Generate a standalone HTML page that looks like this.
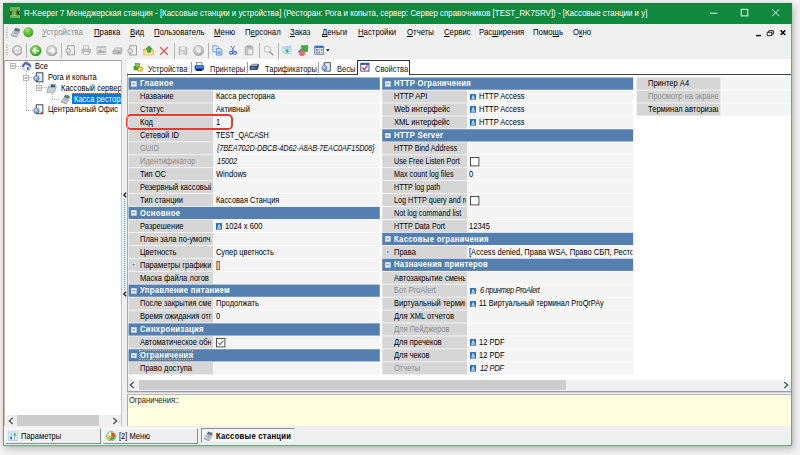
<!DOCTYPE html>
<html lang="ru"><head><meta charset="utf-8"><title>R-Keeper 7</title>
<style>
html,body{margin:0;padding:0;}
body{width:800px;height:455px;overflow:hidden;background:#f3f3f3;position:relative;font-family:"Liberation Sans", sans-serif;}
div,span.t,svg{position:absolute;box-sizing:border-box;}
span.t{white-space:nowrap;display:block;transform-origin:0 50%;}
u{text-decoration:underline;text-underline-offset:1px;text-decoration-thickness:0.8px}
</style></head><body>
<svg width="0" height="0" style="left:0;top:0"><defs>
<radialGradient id="gG" cx="0.4" cy="0.3" r="0.8"><stop offset="0" stop-color="#a8e86a"/><stop offset="0.6" stop-color="#4db82a"/><stop offset="1" stop-color="#2a8a1a"/></radialGradient>
<radialGradient id="gY" cx="0.4" cy="0.3" r="0.8"><stop offset="0" stop-color="#e6e6e6"/><stop offset="0.7" stop-color="#b9b9b9"/><stop offset="1" stop-color="#9a9a9a"/></radialGradient>
<radialGradient id="gB" cx="0.4" cy="0.35" r="0.8"><stop offset="0" stop-color="#cfe0ff"/><stop offset="0.7" stop-color="#6f96e0"/><stop offset="1" stop-color="#3d63b8"/></radialGradient>
</defs></svg>
<div style="left:3.20px;top:2.80px;width:788.80px;height:442.90px;background:#f0f0f0;border:1px solid #5cad7f;box-shadow:2px 3px 7px rgba(0,0,0,0.22),0 0 3px rgba(0,0,0,0.12);"></div>
<div style="left:3.20px;top:2.80px;width:788.80px;height:21.00px;background:#10893e;"></div>
<div style="left:9.70px;top:7.40px;width:10.40px;height:10.50px;background:#69b35a;"></div>
<span class="t" style="left:10.30px;top:8.23px;line-height:10.14px;font-size:7.8px;color:#0a1a0a;transform:scaleX(0.84);font-weight:bold;letter-spacing:0px;">r<span style="color:#f6fcf2">_</span>k</span>
<span class="t title" style="left:23.80px;top:6.89px;line-height:12.61px;font-size:9.7px;color:#fff;transform:scaleX(0.816);">R-Keeper 7 Менеджерская станция - [Кассовые станции и устройства] (Ресторан: Рога и копыта, сервер: Сервер справочников [TEST_RK7SRV]) - [Кассовые станции и у]</span>
<svg style="left:700px;top:3px" width="92" height="21" viewBox="0 0 92 21"><g stroke="#fff" stroke-width="0.9" fill="none"><path d="M10 10.2h7.4"/><rect x="41.2" y="6.3" width="6.6" height="6.6"/><path d="M72.3 6.3l6.8 6.8M79.1 6.3l-6.8 6.8"/></g></svg>
<svg style="left:5px;top:25px" width="4" height="34" viewBox="0 0 4 34"><g fill="#b8b8b8"><rect x="1" y="2" width="1.6" height="1.2"/><rect x="1" y="4.4" width="1.6" height="1.2"/><rect x="1" y="6.8" width="1.6" height="1.2"/><rect x="1" y="9.2" width="1.6" height="1.2"/><rect x="1" y="11.6" width="1.6" height="1.2"/><rect x="1" y="19.5" width="1.6" height="1.2"/><rect x="1" y="21.9" width="1.6" height="1.2"/><rect x="1" y="24.3" width="1.6" height="1.2"/><rect x="1" y="26.7" width="1.6" height="1.2"/><rect x="1" y="29.1" width="1.6" height="1.2"/></g></svg>
<span class="t" style="left:41.50px;top:27.45px;line-height:11.70px;font-size:9.0px;color:#8a8a8a;transform:scaleX(0.865);"><u>У</u>стройства</span>
<span class="t" style="left:93.50px;top:27.45px;line-height:11.70px;font-size:9.0px;color:#000;transform:scaleX(0.865);"><u>П</u>равка</span>
<span class="t" style="left:129.50px;top:27.45px;line-height:11.70px;font-size:9.0px;color:#000;transform:scaleX(0.865);"><u>В</u>ид</span>
<span class="t" style="left:153.50px;top:27.45px;line-height:11.70px;font-size:9.0px;color:#000;transform:scaleX(0.865);"><u>П</u>ользователь</span>
<span class="t" style="left:213.50px;top:27.45px;line-height:11.70px;font-size:9.0px;color:#000;transform:scaleX(0.865);"><u>М</u>еню</span>
<span class="t" style="left:244.50px;top:27.45px;line-height:11.70px;font-size:9.0px;color:#000;transform:scaleX(0.865);">П<u>е</u>рсонал</span>
<span class="t" style="left:289.50px;top:27.45px;line-height:11.70px;font-size:9.0px;color:#000;transform:scaleX(0.865);"><u>З</u>аказ</span>
<span class="t" style="left:321.50px;top:27.45px;line-height:11.70px;font-size:9.0px;color:#000;transform:scaleX(0.865);"><u>Д</u>еньги</span>
<span class="t" style="left:357.50px;top:27.45px;line-height:11.70px;font-size:9.0px;color:#000;transform:scaleX(0.865);"><u>Н</u>астройки</span>
<span class="t" style="left:406.50px;top:27.45px;line-height:11.70px;font-size:9.0px;color:#000;transform:scaleX(0.865);"><u>О</u>тчеты</span>
<span class="t" style="left:443.50px;top:27.45px;line-height:11.70px;font-size:9.0px;color:#000;transform:scaleX(0.865);"><u>С</u>ервис</span>
<span class="t" style="left:478.50px;top:27.45px;line-height:11.70px;font-size:9.0px;color:#000;transform:scaleX(0.865);">Рас<u>ш</u>ирения</span>
<span class="t" style="left:532.50px;top:27.45px;line-height:11.70px;font-size:9.0px;color:#000;transform:scaleX(0.865);">Помо<u>щ</u>ь</span>
<span class="t" style="left:572.50px;top:27.45px;line-height:11.70px;font-size:9.0px;color:#000;transform:scaleX(0.865);">О<u>к</u>но</span>
<svg style="left:750px;top:26px" width="40" height="14" viewBox="0 0 40 14"><g stroke="#111" fill="none"><path d="M6 9.6h5" stroke-width="1.4"/><path d="M17.2 6.3h4.6v3.4h-4.6z M18.8 6.3v-1.6h4.6v3.4h-1.6" stroke-width="0.9"/><path d="M30.6 4.4l4.6 4.6M35.2 4.4l-4.6 4.6" stroke-width="1.5"/></g></svg>
<svg style="left:11.70px;top:45.10px;" width="10.8" height="10.8" viewBox="0 0 12 12"><circle cx="6" cy="6" r="5.4" fill="url(#gY)" stroke="#8e8e8e" stroke-width="0.7"/><path d="M3 6.4a3 3 0 0 1 5-2.4M9 5.6a3 3 0 0 1-5 2.4" stroke="#fff" stroke-width="1.2" fill="none"/><path d="M8.6 2.4v2.2h-2.2zM3.4 9.6v-2.2h2.2z" fill="#fff"/></svg>
<svg style="left:30.00px;top:44.70px;" width="11.6" height="11.6" viewBox="0 0 12 12"><circle cx="6" cy="6" r="5.6" fill="url(#gG)" stroke="#2f8f22" stroke-width="0.5"/><path d="M9.3 6H3.6M6 3.2L3.2 6L6 8.8" stroke="#fff" stroke-width="1.6" fill="none"/></svg>
<svg style="left:45.60px;top:44.70px;" width="11.6" height="11.6" viewBox="0 0 12 12"><circle cx="6" cy="6" r="5.6" fill="url(#gY)" stroke="#9a9a9a" stroke-width="0.5"/><path d="M2.7 6h5.7M6 3.2L8.8 6L6 8.8" stroke="#fff" stroke-width="1.6" fill="none"/></svg>
<svg style="left:64.60px;top:45.20px;" width="10.6" height="10.6" viewBox="0 0 12 12"><rect x="3" y="0.9" width="7.6" height="10.2" fill="#f2f2f2" stroke="#8c8c8c" stroke-width="0.9"/><circle cx="3.6" cy="6.6" r="2.6" fill="#e4e4e4" stroke="#8c8c8c" stroke-width="0.8"/></svg>
<svg style="left:81.20px;top:45.30px;" width="10.4" height="10.4" viewBox="0 0 12 12"><rect x="3.2" y="1" width="5.6" height="4" fill="#ededed" stroke="#a0a0a0" stroke-width="0.7"/><rect x="1" y="4.6" width="10" height="4.6" rx="0.8" fill="#c4c4c4" stroke="#9c9c9c" stroke-width="0.6"/><rect x="2.8" y="7.8" width="6.4" height="3" fill="#f4f4f4" stroke="#a0a0a0" stroke-width="0.6"/></svg>
<svg style="left:96.00px;top:45.10px;" width="10.8" height="10.8" viewBox="0 0 12 12"><rect x="1" y="1.4" width="10" height="9" fill="#dcdcdc" stroke="#b0b0b0" stroke-width="0.6"/><path d="M1.4 8.6L4.6 4.6L7 7.6L8.6 6L10.6 8.6z" fill="#a8a8a8"/><path d="M2 2.6h8" stroke="#bcbcbc" stroke-width="1.2"/></svg>
<svg style="left:111.60px;top:44.90px;" width="11.2" height="11.2" viewBox="0 0 12 12"><path d="M1 6.4L3.6 3h7l-1 3.4z" fill="#d8d8d8" stroke="#a8a8a8" stroke-width="0.6"/><path d="M1 6.4h8.6l1-3.4v3.2L9.6 9.6H1z" fill="#bdbdbd" stroke="#a0a0a0" stroke-width="0.6"/><path d="M6 8h2.6" stroke="#8a8a8a" stroke-width="0.8"/></svg>
<svg style="left:127.20px;top:45.10px;" width="10.8" height="10.8" viewBox="0 0 12 12"><rect x="3" y="0.9" width="7.6" height="10.2" fill="#f2f2f2" stroke="#8c8c8c" stroke-width="0.9"/><circle cx="3.6" cy="6.6" r="2.6" fill="#e4e4e4" stroke="#8c8c8c" stroke-width="0.8"/></svg>
<svg style="left:143.20px;top:45.00px;" width="11.0" height="11.0" viewBox="0 0 12 12"><path d="M0.8 4.4h3.4l1 1h6v5.4H0.8z" fill="#f3d873" stroke="#c9a638" stroke-width="0.7"/><path d="M1.6 7.4h8.8v3H1.6z" fill="#f9e9a4"/><path d="M6.6 0.8L10.2 4.6H8.2V8H5V4.6H3z" fill="#3cae3c" stroke="#1f7f22" stroke-width="0.5"/></svg>
<svg style="left:159.40px;top:45.50px;" width="10.0" height="10.0" viewBox="0 0 12 12"><path d="M1.4 1.4L10.6 10.6M10.6 1.4L1.4 10.6" stroke="#e8442c" stroke-width="1.5" fill="none"/></svg>
<svg style="left:178.40px;top:45.60px;" width="9.8" height="9.8" viewBox="0 0 12 12"><path d="M1.4 1.2h8l1.4 1.4v8.2H1.4z" fill="#c9c9c9" stroke="#a2a2a2" stroke-width="0.7"/><rect x="3.2" y="1.4" width="5.2" height="3.4" fill="#efefef"/><rect x="3" y="6.8" width="6" height="4" fill="#e6e6e6"/><rect x="6.6" y="7.4" width="1.4" height="2.6" fill="#b0b0b0"/></svg>
<svg style="left:193.20px;top:44.90px;" width="11.2" height="11.2" viewBox="0 0 12 12"><circle cx="6" cy="6" r="5.6" fill="url(#gY)" stroke="#a2a2a2" stroke-width="0.5"/><path d="M3.4 6.4h4.4M6 4.4l2 2l-2 2" stroke="#f4f4f4" stroke-width="1.1" fill="none"/><path d="M3.4 6a2.8 2.8 0 0 1 5-1.6" stroke="#efefef" stroke-width="0.9" fill="none"/></svg>
<svg style="left:212.20px;top:45.10px;" width="10.8" height="10.8" viewBox="0 0 12 12"><path d="M1 0.8h4.6l1.6 1.6v5.2H1z" fill="#dceafc" stroke="#4f86d6" stroke-width="0.8"/><path d="M4.8 4h4.6l1.6 1.6v5.6H4.8z" fill="#cfe2fb" stroke="#3f78cf" stroke-width="0.8"/><rect x="6" y="6.6" width="3.8" height="3.4" fill="#7eb0ee"/></svg>
<svg style="left:228.40px;top:45.30px;" width="10.4" height="10.4" viewBox="0 0 12 12"><path d="M3.4 0.8L7 7.2M7.6 0.8L4.6 7.2" stroke="#6f7f96" stroke-width="1.1" fill="none"/><circle cx="3.6" cy="9" r="1.7" fill="none" stroke="#2a5fd0" stroke-width="1.2"/><circle cx="8.2" cy="9" r="1.7" fill="none" stroke="#2a5fd0" stroke-width="1.2"/></svg>
<svg style="left:244.00px;top:45.20px;" width="10.6" height="10.6" viewBox="0 0 12 12"><rect x="1.2" y="1.6" width="9" height="9.6" rx="0.8" fill="#c6c6c6" stroke="#a4a4a4" stroke-width="0.7"/><rect x="3.6" y="0.6" width="4.2" height="2.2" fill="#b4b4b4" stroke="#9c9c9c" stroke-width="0.5"/><rect x="4.4" y="4.6" width="5.4" height="6" fill="#ececec" stroke="#b0b0b0" stroke-width="0.5"/></svg>
<svg style="left:262.60px;top:44.90px;" width="11.2" height="11.2" viewBox="0 0 12 12"><circle cx="4.8" cy="4.6" r="3.4" fill="#f6f6f6" stroke="#b4b4b4" stroke-width="1"/><path d="M7.2 7.2L11 11" stroke="#9c9c9c" stroke-width="1.7"/></svg>
<svg style="left:282.40px;top:45.40px;" width="10.2" height="10.2" viewBox="0 0 12 12"><path d="M1 2.4L10.6 1v9.6L1 9.4z" fill="#cfe8f6" stroke="#8cc2e0" stroke-width="0.7"/><path d="M2 3.2l7.8-1v1.6L2 4.6z" fill="#a6d4ee"/><path d="M4.4 5.2h4.2L6.4 7.2h2.4L5 10.4l0.8-2.6H4z" fill="#3cb043"/></svg>
<svg style="left:297.20px;top:44.80px;" width="11.4" height="11.4" viewBox="0 0 12 12"><rect x="5" y="0.6" width="6.4" height="6.4" fill="#3fae3f" stroke="#2c8a2c" stroke-width="0.5"/><path d="M0.4 8L4 3.8L6.6 8z" fill="#3f7fe0"/><circle cx="5.4" cy="8.6" r="2.8" fill="#f06a6a" stroke="#d24a4a" stroke-width="0.4"/></svg>
<svg style="left:313.60px;top:45.30px;" width="10.4" height="10.4" viewBox="0 0 12 12"><rect x="0.8" y="1.2" width="10.4" height="9.6" rx="0.8" fill="#eaf1fb" stroke="#3f73c8" stroke-width="1"/><rect x="0.8" y="1.2" width="10.4" height="2.4" fill="#3f73c8"/><rect x="2.2" y="4.6" width="2" height="2" fill="#3f7fe0"/><rect x="5" y="4.6" width="2" height="2" fill="#e8b030"/><rect x="7.8" y="4.6" width="2" height="2" fill="#3fae3f"/><rect x="2.2" y="7.6" width="2" height="2" fill="#e05a3a"/><rect x="5" y="7.6" width="2" height="2" fill="#3f7fe0"/><rect x="7.8" y="7.6" width="2" height="2" fill="#e8b030"/></svg>
<div style="left:26.30px;top:43.40px;width:0.90px;height:14.20px;background:#b4b4b4;"></div>
<div style="left:60.80px;top:43.40px;width:0.90px;height:14.20px;background:#b4b4b4;"></div>
<div style="left:174.10px;top:43.40px;width:0.90px;height:14.20px;background:#b4b4b4;"></div>
<div style="left:208.30px;top:43.40px;width:0.90px;height:14.20px;background:#b4b4b4;"></div>
<div style="left:258.90px;top:43.40px;width:0.90px;height:14.20px;background:#b4b4b4;"></div>
<div style="left:277.80px;top:43.40px;width:0.90px;height:14.20px;background:#b4b4b4;"></div>
<svg style="left:326px;top:48.6px" width="4" height="3" viewBox="0 0 4 3"><path d="M0 0.3h3.6L1.8 2.4z" fill="#111"/></svg>
<svg style="left:9.60px;top:27.00px;" width="11" height="11.4" viewBox="0 0 12 12"><path d="M1 8.2L5.6 2.2l5.6 1.6L7.4 10.4z" fill="#d2d6de" stroke="#8a909c" stroke-width="0.6"/><path d="M6 1l4.6 1.2l-1.4 2.4L4.8 3.2z" fill="#5c6675" stroke="#4a505c" stroke-width="0.4"/><rect x="7" y="1.8" width="2.2" height="1.4" fill="#47b04a" transform="rotate(14 8 2.5)"/><path d="M1 8.2l6.4 2.2v1.2L1 9.4z" fill="#9aa2b0"/><path d="M3.4 6.6l4.4 1.4M4.4 5.4l4.4 1.4M5.2 4.4l4.2 1.3" stroke="#8a93a6" stroke-width="0.7"/></svg>
<svg style="left:22.80px;top:27.40px;" width="10.6" height="10.6" viewBox="0 0 12 12"><circle cx="6" cy="6" r="5.7" fill="url(#gG)"/></svg>
<div style="left:4.20px;top:59.60px;width:117.00px;height:366.60px;background:#fff;border-top:1px solid #a0a0a0;border-left:1px solid #b8b8b8;"></div>
<div style="left:16.00px;top:65.90px;width:5.00px;height:0.80px;border-top:0.8px dotted #b4b4b4;"></div>
<div style="left:25.90px;top:71.00px;width:0.80px;height:39.00px;border-left:0.8px dotted #b4b4b4;"></div>
<div style="left:29.00px;top:77.10px;width:4.50px;height:0.80px;border-top:0.8px dotted #b4b4b4;"></div>
<div style="left:38.90px;top:83.00px;width:0.80px;height:4.80px;border-left:0.8px dotted #b4b4b4;"></div>
<div style="left:42.00px;top:87.40px;width:4.50px;height:0.80px;border-top:0.8px dotted #b4b4b4;"></div>
<div style="left:52.00px;top:93.00px;width:0.80px;height:6.20px;border-left:0.8px dotted #b4b4b4;"></div>
<div style="left:52.40px;top:98.80px;width:6.60px;height:0.80px;border-top:0.8px dotted #b4b4b4;"></div>
<div style="left:26.30px;top:109.60px;width:7.20px;height:0.80px;border-top:0.8px dotted #b4b4b4;"></div>
<svg style="left:10.30px;top:63.30px" width="6" height="6" viewBox="0 0 6 6"><rect x="0.4" y="0.4" width="5.2" height="5.2" fill="#fff" stroke="#9a9a9a" stroke-width="0.7"/><path d="M1.5 3h3" stroke="#3a4a7a" stroke-width="0.8"/></svg>
<svg style="left:23.30px;top:74.50px" width="6" height="6" viewBox="0 0 6 6"><rect x="0.4" y="0.4" width="5.2" height="5.2" fill="#fff" stroke="#9a9a9a" stroke-width="0.7"/><path d="M1.5 3h3" stroke="#3a4a7a" stroke-width="0.8"/></svg>
<svg style="left:36.30px;top:84.80px" width="6" height="6" viewBox="0 0 6 6"><rect x="0.4" y="0.4" width="5.2" height="5.2" fill="#fff" stroke="#9a9a9a" stroke-width="0.7"/><path d="M1.5 3h3" stroke="#3a4a7a" stroke-width="0.8"/></svg>
<svg style="left:21.00px;top:60.60px;" width="10.8" height="10.8" viewBox="0 0 12 12"><circle cx="6" cy="6.4" r="5" fill="#eef0f6" stroke="#9aa0b4" stroke-width="0.6"/><path d="M1.2 5.4L5 0.8l4.8 2.4l1.4 3.4l-2.6-1.4L5 3.6L2.4 7z" fill="#5a62c8" stroke="#3a40a0" stroke-width="0.5"/><rect x="7" y="6.4" width="2.2" height="3.4" fill="#4a56b8"/><path d="M3 7l2-3l3.6 1.6v5l-3.4 1z" fill="#f4f5fa" stroke="#aab0c4" stroke-width="0.4"/><rect x="6.6" y="7" width="1.8" height="3" fill="#4a56b8"/></svg>
<span class="t" style="left:35.00px;top:60.75px;line-height:11.70px;font-size:9.0px;color:#000;transform:scaleX(0.838);width:103.10px;overflow:hidden;">Все</span>
<svg style="left:33.30px;top:71.80px;" width="10.8" height="10.8" viewBox="0 0 12 12"><rect x="3.6" y="0.9" width="7.4" height="10" fill="#e2eef4" stroke="#30343c" stroke-width="1"/><circle cx="3.8" cy="7" r="3" fill="url(#gB)" stroke="#3a56a8" stroke-width="0.6"/></svg>
<span class="t" style="left:48.00px;top:71.95px;line-height:11.70px;font-size:9.0px;color:#000;transform:scaleX(0.838);width:87.59px;overflow:hidden;">Рога и копыта</span>
<svg style="left:46.30px;top:82.60px;" width="10.8" height="10.8" viewBox="0 0 12 12"><path d="M0.8 10.4L2.6 4.4h8.8l-2 6z" fill="#c8d0d8" stroke="#7c8690" stroke-width="0.6"/><path d="M2.8 4.2L4.4 1.4h6.2l0.6 2.8z" fill="#e8ecf0" stroke="#8a929c" stroke-width="0.6"/><rect x="5.6" y="1.8" width="4.4" height="2.6" fill="#3c4450"/><rect x="7.8" y="2.2" width="1.6" height="1.2" fill="#47b04a"/></svg>
<span class="t" style="left:61.00px;top:82.75px;line-height:11.70px;font-size:9.0px;color:#000;transform:scaleX(0.838);width:72.08px;overflow:hidden;">Кассовый сервер</span>
<svg style="left:59.60px;top:93.60px;" width="10.8" height="10.8" viewBox="0 0 12 12"><path d="M1 8.2L5.6 2.2l5.6 1.6L7.4 10.4z" fill="#d2d6de" stroke="#8a909c" stroke-width="0.6"/><path d="M6 1l4.6 1.2l-1.4 2.4L4.8 3.2z" fill="#5c6675" stroke="#4a505c" stroke-width="0.4"/><rect x="7" y="1.8" width="2.2" height="1.4" fill="#47b04a" transform="rotate(14 8 2.5)"/><path d="M1 8.2l6.4 2.2v1.2L1 9.4z" fill="#9aa2b0"/><path d="M3.4 6.6l4.4 1.4M4.4 5.4l4.4 1.4M5.2 4.4l4.2 1.3" stroke="#8a93a6" stroke-width="0.7"/></svg>
<div style="left:72.40px;top:93.40px;width:49.00px;height:10.80px;background:#0078d7;border-top:0.8px dotted #e0904a;"></div>
<span class="t" style="left:74.00px;top:93.75px;line-height:11.70px;font-size:9.0px;color:#fff;transform:scaleX(0.838);width:56.56px;overflow:hidden;">Касса ресторана</span>
<svg style="left:33.30px;top:104.30px;" width="10.8" height="10.8" viewBox="0 0 12 12"><rect x="3.6" y="0.9" width="7.4" height="10" fill="#f2f6f8" stroke="#30343c" stroke-width="1"/><circle cx="3.8" cy="7.4" r="3" fill="url(#gB)" stroke="#3a56a8" stroke-width="0.6"/><rect x="8.6" y="8.6" width="2.2" height="2.2" fill="#e83a3a"/></svg>
<span class="t" style="left:48.00px;top:104.45px;line-height:11.70px;font-size:9.0px;color:#000;transform:scaleX(0.838);width:87.59px;overflow:hidden;">Центральный Офис</span>
<div style="left:5.60px;top:415.30px;width:115.60px;height:10.70px;background:#f0f0f0;"></div>
<div style="left:17.00px;top:415.30px;width:82.20px;height:10.70px;background:#cdcdcd;"></div>
<svg style="left:6.80px;top:415.60px" width="8" height="10" viewBox="0 0 8 10"><path d="M5.70 2.00L2.30 5L5.70 8.00" stroke="#505050" stroke-width="1.3" fill="none"/></svg>
<svg style="left:110.80px;top:415.60px" width="8" height="10" viewBox="0 0 8 10"><path d="M2.30 2.00L5.70 5L2.30 8.00" stroke="#505050" stroke-width="1.3" fill="none"/></svg>
<div style="left:120.80px;top:59.60px;width:0.90px;height:366.60px;background:#c4c4c4;"></div>
<svg style="left:120.60px;top:189.60px" width="8" height="10" viewBox="0 0 8 10"><path d="M5.15 2.70L2.85 5L5.15 7.30" stroke="#202020" stroke-width="1.3" fill="none"/></svg>
<svg style="left:120.60px;top:289.00px" width="8" height="10" viewBox="0 0 8 10"><path d="M5.15 2.70L2.85 5L5.15 7.30" stroke="#202020" stroke-width="1.3" fill="none"/></svg>
<div style="left:124.00px;top:198.60px;width:1.20px;height:91.40px;border-left:1.1px dotted #5b9be6;"></div>
<div style="left:126.90px;top:59.00px;width:664.00px;height:15.00px;background:#fff;"></div>
<div style="left:126.90px;top:74.00px;width:230.00px;height:1.30px;background:#404040;"></div>
<div style="left:410.20px;top:74.00px;width:380.70px;height:1.30px;background:#404040;"></div>
<div style="left:357.60px;top:74.60px;width:52.60px;height:0.80px;background:#d8d8d8;"></div>
<div style="left:356.80px;top:59.80px;width:53.60px;height:15.50px;background:#fff;border:1px solid #303030;border-bottom:none;"></div>
<span class="t" style="left:148.00px;top:63.55px;line-height:11.70px;font-size:9.0px;color:#111;transform:scaleX(0.838);">Устройства</span>
<span class="t" style="left:210.00px;top:63.55px;line-height:11.70px;font-size:9.0px;color:#111;transform:scaleX(0.838);">Принтеры</span>
<span class="t" style="left:265.00px;top:63.55px;line-height:11.70px;font-size:9.0px;color:#111;transform:scaleX(0.838);">Тарификаторы</span>
<span class="t" style="left:336.80px;top:63.55px;line-height:11.70px;font-size:9.0px;color:#111;transform:scaleX(0.838);">Весы</span>
<span class="t" style="left:375.00px;top:63.55px;line-height:11.70px;font-size:9.0px;color:#111;transform:scaleX(0.838);">Свойства</span>
<div style="left:190.80px;top:62.00px;width:0.90px;height:11.00px;background:#a0a0a0;"></div>
<div style="left:246.50px;top:62.00px;width:0.90px;height:11.00px;background:#a0a0a0;"></div>
<div style="left:318.40px;top:62.00px;width:0.90px;height:11.00px;background:#a0a0a0;"></div>
<svg style="left:133.00px;top:62.00px;" width="10.6" height="10" viewBox="0 0 12 12"><rect x="0.8" y="5" width="6" height="4.6" fill="#3fae3f" stroke="#1f7f22" stroke-width="0.6"/><rect x="2.6" y="1.8" width="5" height="4.4" fill="#6fd04a" stroke="#1f7f22" stroke-width="0.6"/><rect x="5.4" y="6" width="5.8" height="5" rx="0.6" fill="#f0c030" stroke="#b88a10" stroke-width="0.6"/><rect x="6.8" y="8" width="3" height="1.4" fill="#fff3c0"/></svg>
<svg style="left:194.40px;top:62.00px;" width="10.6" height="10" viewBox="0 0 12 12"><rect x="2.8" y="0.8" width="6.4" height="4" fill="#f4f8fc" stroke="#3a4a6a" stroke-width="0.6"/><rect x="0.8" y="4.2" width="10.4" height="5.4" rx="1" fill="#1f66d0" stroke="#0c3a8a" stroke-width="0.6"/><rect x="2.6" y="8.2" width="6.8" height="2.6" fill="#16233a"/><rect x="2" y="5.4" width="8" height="1.2" fill="#6fa4f0"/></svg>
<svg style="left:249.30px;top:62.40px;" width="10.6" height="10" viewBox="0 0 12 12"><path d="M0.8 5.2L3.4 2.6h7.4l-1.2 2.8z" fill="#b8c4dc" stroke="#2a3450" stroke-width="0.6"/><path d="M0.8 5.2h8.8l1.2-2.6v3.6L9.6 9.2H0.8z" fill="#3a4c7c" stroke="#1c2440" stroke-width="0.6"/><path d="M2 7.2h5" stroke="#9fb4e0" stroke-width="0.9"/></svg>
<svg style="left:321.20px;top:62.00px;" width="10.3" height="10" viewBox="0 0 12 12"><rect x="3.6" y="0.9" width="7.4" height="10" fill="#e2eef4" stroke="#30343c" stroke-width="1"/><circle cx="3.8" cy="7" r="3" fill="url(#gB)" stroke="#3a56a8" stroke-width="0.6"/></svg>
<svg style="left:360.40px;top:62.00px;" width="9.8" height="10" viewBox="0 0 12 12"><rect x="1" y="1.4" width="10" height="9.6" fill="#fff" stroke="#2a3a8a" stroke-width="1.1"/><rect x="1" y="1.4" width="10" height="2" fill="#2a4ab0"/><path d="M3 6.6l2.2 2.4L9.4 4" stroke="#d8281e" stroke-width="1.5" fill="none"/></svg>
<div style="left:126.90px;top:75.30px;width:664.00px;height:305.00px;background:#fff;"></div>
<svg style="left:0;top:0" width="800" height="455" viewBox="0 0 800 455"><rect x="128.50" y="77.50" width="251.30" height="12.24" fill="#557fae"/><rect x="128.50" y="90.44" width="84.70" height="12.24" fill="#d6d6d6"/><rect x="213.20" y="90.44" width="166.60" height="12.24" fill="#f4f4f4"/><rect x="128.50" y="103.38" width="84.70" height="12.24" fill="#d6d6d6"/><rect x="213.20" y="103.38" width="166.60" height="12.24" fill="#f4f4f4"/><rect x="128.50" y="116.32" width="84.70" height="12.24" fill="#d6d6d6"/><rect x="213.20" y="116.32" width="166.60" height="12.24" fill="#f4f4f4"/><rect x="128.50" y="129.26" width="84.70" height="12.24" fill="#d6d6d6"/><rect x="213.20" y="129.26" width="166.60" height="12.24" fill="#f4f4f4"/><rect x="128.50" y="142.20" width="84.70" height="12.24" fill="#d6d6d6"/><rect x="213.20" y="142.20" width="166.60" height="12.24" fill="#f4f4f4"/><rect x="128.50" y="155.14" width="84.70" height="12.24" fill="#d6d6d6"/><rect x="213.20" y="155.14" width="166.60" height="12.24" fill="#f4f4f4"/><rect x="128.50" y="168.08" width="84.70" height="12.24" fill="#d6d6d6"/><rect x="213.20" y="168.08" width="166.60" height="12.24" fill="#f4f4f4"/><rect x="128.50" y="181.02" width="84.70" height="12.24" fill="#d6d6d6"/><rect x="213.20" y="181.02" width="166.60" height="12.24" fill="#f4f4f4"/><rect x="128.50" y="193.96" width="84.70" height="12.24" fill="#d6d6d6"/><rect x="213.20" y="193.96" width="166.60" height="12.24" fill="#f4f4f4"/><rect x="128.50" y="206.90" width="251.30" height="12.24" fill="#557fae"/><rect x="128.50" y="219.84" width="84.70" height="12.24" fill="#d6d6d6"/><rect x="213.20" y="219.84" width="166.60" height="12.24" fill="#f4f4f4"/><rect x="128.50" y="232.78" width="84.70" height="12.24" fill="#d6d6d6"/><rect x="213.20" y="232.78" width="166.60" height="12.24" fill="#f4f4f4"/><rect x="128.50" y="245.72" width="84.70" height="12.24" fill="#d6d6d6"/><rect x="213.20" y="245.72" width="166.60" height="12.24" fill="#f4f4f4"/><rect x="128.50" y="258.66" width="84.70" height="12.24" fill="#d6d6d6"/><rect x="213.20" y="258.66" width="166.60" height="12.24" fill="#f4f4f4"/><rect x="128.50" y="271.60" width="84.70" height="12.24" fill="#d6d6d6"/><rect x="213.20" y="271.60" width="166.60" height="12.24" fill="#f4f4f4"/><rect x="128.50" y="284.54" width="251.30" height="12.24" fill="#557fae"/><rect x="128.50" y="297.48" width="84.70" height="12.24" fill="#d6d6d6"/><rect x="213.20" y="297.48" width="166.60" height="12.24" fill="#f4f4f4"/><rect x="128.50" y="310.42" width="84.70" height="12.24" fill="#d6d6d6"/><rect x="213.20" y="310.42" width="166.60" height="12.24" fill="#f4f4f4"/><rect x="128.50" y="323.36" width="251.30" height="12.24" fill="#557fae"/><rect x="128.50" y="336.30" width="84.70" height="12.24" fill="#d6d6d6"/><rect x="213.20" y="336.30" width="166.60" height="12.24" fill="#f4f4f4"/><rect x="128.50" y="349.24" width="251.30" height="12.24" fill="#557fae"/><rect x="128.50" y="362.18" width="84.70" height="12.24" fill="#d6d6d6"/><rect x="213.20" y="362.18" width="166.60" height="12.24" fill="#f4f4f4"/><rect x="382.20" y="77.50" width="251.00" height="12.24" fill="#557fae"/><rect x="382.20" y="90.44" width="84.80" height="12.24" fill="#d6d6d6"/><rect x="467.00" y="90.44" width="166.20" height="12.24" fill="#f4f4f4"/><rect x="382.20" y="103.38" width="84.80" height="12.24" fill="#d6d6d6"/><rect x="467.00" y="103.38" width="166.20" height="12.24" fill="#f4f4f4"/><rect x="382.20" y="116.32" width="84.80" height="12.24" fill="#d6d6d6"/><rect x="467.00" y="116.32" width="166.20" height="12.24" fill="#f4f4f4"/><rect x="382.20" y="129.26" width="251.00" height="12.24" fill="#557fae"/><rect x="382.20" y="142.20" width="84.80" height="12.24" fill="#d6d6d6"/><rect x="467.00" y="142.20" width="166.20" height="12.24" fill="#f4f4f4"/><rect x="382.20" y="155.14" width="84.80" height="12.24" fill="#d6d6d6"/><rect x="467.00" y="155.14" width="166.20" height="12.24" fill="#f4f4f4"/><rect x="382.20" y="168.08" width="84.80" height="12.24" fill="#d6d6d6"/><rect x="467.00" y="168.08" width="166.20" height="12.24" fill="#f4f4f4"/><rect x="382.20" y="181.02" width="84.80" height="12.24" fill="#d6d6d6"/><rect x="467.00" y="181.02" width="166.20" height="12.24" fill="#f4f4f4"/><rect x="382.20" y="193.96" width="84.80" height="12.24" fill="#d6d6d6"/><rect x="467.00" y="193.96" width="166.20" height="12.24" fill="#f4f4f4"/><rect x="382.20" y="206.90" width="84.80" height="12.24" fill="#d6d6d6"/><rect x="467.00" y="206.90" width="166.20" height="12.24" fill="#f4f4f4"/><rect x="382.20" y="219.84" width="84.80" height="12.24" fill="#d6d6d6"/><rect x="467.00" y="219.84" width="166.20" height="12.24" fill="#f4f4f4"/><rect x="382.20" y="232.78" width="251.00" height="12.24" fill="#557fae"/><rect x="382.20" y="245.72" width="84.80" height="12.24" fill="#d6d6d6"/><rect x="467.00" y="245.72" width="166.20" height="12.24" fill="#f4f4f4"/><rect x="382.20" y="258.66" width="251.00" height="12.24" fill="#557fae"/><rect x="382.20" y="271.60" width="84.80" height="12.24" fill="#d6d6d6"/><rect x="467.00" y="271.60" width="166.20" height="12.24" fill="#f4f4f4"/><rect x="382.20" y="284.54" width="84.80" height="12.24" fill="#d6d6d6"/><rect x="467.00" y="284.54" width="166.20" height="12.24" fill="#f4f4f4"/><rect x="382.20" y="297.48" width="84.80" height="12.24" fill="#d6d6d6"/><rect x="467.00" y="297.48" width="166.20" height="12.24" fill="#f4f4f4"/><rect x="382.20" y="310.42" width="84.80" height="12.24" fill="#d6d6d6"/><rect x="467.00" y="310.42" width="166.20" height="12.24" fill="#f4f4f4"/><rect x="382.20" y="323.36" width="84.80" height="12.24" fill="#d6d6d6"/><rect x="467.00" y="323.36" width="166.20" height="12.24" fill="#f4f4f4"/><rect x="382.20" y="336.30" width="84.80" height="12.24" fill="#d6d6d6"/><rect x="467.00" y="336.30" width="166.20" height="12.24" fill="#f4f4f4"/><rect x="382.20" y="349.24" width="84.80" height="12.24" fill="#d6d6d6"/><rect x="467.00" y="349.24" width="166.20" height="12.24" fill="#f4f4f4"/><rect x="382.20" y="362.18" width="84.80" height="12.24" fill="#d6d6d6"/><rect x="467.00" y="362.18" width="166.20" height="12.24" fill="#f4f4f4"/><rect x="636.60" y="77.50" width="84.00" height="12.24" fill="#d6d6d6"/><rect x="720.60" y="77.50" width="70.20" height="12.24" fill="#f4f4f4"/><rect x="636.60" y="90.44" width="84.00" height="12.24" fill="#d6d6d6"/><rect x="720.60" y="90.44" width="70.20" height="12.24" fill="#f4f4f4"/><rect x="636.60" y="103.38" width="84.00" height="12.24" fill="#d6d6d6"/><rect x="720.60" y="103.38" width="70.20" height="12.24" fill="#f4f4f4"/></svg>
<svg style="left:131.20px;top:80.97px" width="5.7" height="5.7" viewBox="0 0 7 7"><rect x="0.4" y="0.4" width="6.2" height="6.2" fill="#eef2f8" stroke="#c9d6e6" stroke-width="0.8"/><path d="M1.8 3.5h3.4" stroke="#3a5f8f" stroke-width="1"/></svg>
<span class="t" style="left:140.10px;top:78.29px;line-height:11.96px;font-size:9.2px;color:#fff;transform:scaleX(0.838);font-weight:bold;letter-spacing:0.35px;">Главное</span>
<span class="t" style="left:140.10px;top:91.36px;line-height:11.70px;font-size:9.0px;color:#000;transform:scaleX(0.838);width:85.32px;overflow:hidden;">Название</span>
<span class="t" style="left:215.60px;top:91.36px;line-height:11.70px;font-size:9.0px;color:#000;transform:scaleX(0.838);width:195.94px;overflow:hidden;">Касса ресторана</span>
<span class="t" style="left:140.10px;top:104.30px;line-height:11.70px;font-size:9.0px;color:#000;transform:scaleX(0.838);width:85.32px;overflow:hidden;">Статус</span>
<span class="t" style="left:215.60px;top:104.30px;line-height:11.70px;font-size:9.0px;color:#000;transform:scaleX(0.838);width:195.94px;overflow:hidden;">Активный</span>
<span class="t" style="left:140.10px;top:117.24px;line-height:11.70px;font-size:9.0px;color:#000;transform:scaleX(0.838);width:85.32px;overflow:hidden;">Код</span>
<span class="t" style="left:215.60px;top:117.24px;line-height:11.70px;font-size:9.0px;color:#000;transform:scaleX(0.838);width:195.94px;overflow:hidden;">1</span>
<span class="t" style="left:140.10px;top:130.18px;line-height:11.70px;font-size:9.0px;color:#000;transform:scaleX(0.838);width:85.32px;overflow:hidden;">Сетевой ID</span>
<span class="t" style="left:215.60px;top:130.18px;line-height:11.70px;font-size:9.0px;color:#000;transform:scaleX(0.8);width:205.25px;overflow:hidden;">TEST_QACASH</span>
<span class="t" style="left:140.10px;top:143.12px;line-height:11.70px;font-size:9.0px;color:#8c8c8c;transform:scaleX(0.838);width:85.32px;overflow:hidden;">GUID</span>
<span class="t" style="left:216.60px;top:143.25px;line-height:11.44px;font-size:8.8px;color:#111;transform:scaleX(0.838);font-style:italic;width:194.75px;overflow:hidden;letter-spacing:-0.16px;">{7BEA702D-DBCB-4D62-A8AB-7EAC0AF15D08}</span>
<span class="t" style="left:140.10px;top:156.06px;line-height:11.70px;font-size:9.0px;color:#8c8c8c;transform:scaleX(0.838);width:85.32px;overflow:hidden;">Идентификатор</span>
<span class="t" style="left:216.60px;top:156.06px;line-height:11.70px;font-size:9.0px;color:#111;transform:scaleX(0.838);font-style:italic;width:194.75px;overflow:hidden;letter-spacing:-0.25px;">15002</span>
<span class="t" style="left:140.10px;top:169.00px;line-height:11.70px;font-size:9.0px;color:#000;transform:scaleX(0.838);width:85.32px;overflow:hidden;">Тип ОС</span>
<span class="t" style="left:215.60px;top:169.00px;line-height:11.70px;font-size:9.0px;color:#000;transform:scaleX(0.838);width:195.94px;overflow:hidden;">Windows</span>
<span class="t" style="left:140.10px;top:181.94px;line-height:11.70px;font-size:9.0px;color:#000;transform:scaleX(0.838);width:85.32px;overflow:hidden;">Резервный кассовый</span>
<span class="t" style="left:140.10px;top:194.88px;line-height:11.70px;font-size:9.0px;color:#000;transform:scaleX(0.838);width:85.32px;overflow:hidden;">Тип станции</span>
<span class="t" style="left:215.60px;top:194.88px;line-height:11.70px;font-size:9.0px;color:#000;transform:scaleX(0.822);width:199.76px;overflow:hidden;">Кассовая Станция</span>
<svg style="left:131.20px;top:210.37px" width="5.7" height="5.7" viewBox="0 0 7 7"><rect x="0.4" y="0.4" width="6.2" height="6.2" fill="#eef2f8" stroke="#c9d6e6" stroke-width="0.8"/><path d="M1.8 3.5h3.4" stroke="#3a5f8f" stroke-width="1"/></svg>
<span class="t" style="left:140.10px;top:207.69px;line-height:11.96px;font-size:9.2px;color:#fff;transform:scaleX(0.838);font-weight:bold;letter-spacing:0.35px;">Основное</span>
<span class="t" style="left:140.10px;top:220.76px;line-height:11.70px;font-size:9.0px;color:#000;transform:scaleX(0.838);width:85.32px;overflow:hidden;">Разрешение</span>
<svg style="left:216.10px;top:222.91px" width="6.3" height="6.8" viewBox="0 0 7 7.4"><rect width="7" height="7.4" fill="#2470b8"/><path d="M2 5.6L3.5 1.6L5 5.6M2.5 4.3h2M1.6 6.3h3.8" stroke="#fff" stroke-width="0.8" fill="none"/></svg>
<span class="t" style="left:225.40px;top:220.76px;line-height:11.70px;font-size:9.0px;color:#000;transform:scaleX(0.838);width:184.25px;overflow:hidden;">1024 x 600</span>
<span class="t" style="left:140.10px;top:233.70px;line-height:11.70px;font-size:9.0px;color:#000;transform:scaleX(0.838);width:85.32px;overflow:hidden;">План зала по-умолч.</span>
<span class="t" style="left:140.10px;top:246.64px;line-height:11.70px;font-size:9.0px;color:#000;transform:scaleX(0.838);width:85.32px;overflow:hidden;">Цветность</span>
<span class="t" style="left:215.60px;top:246.64px;line-height:11.70px;font-size:9.0px;color:#000;transform:scaleX(0.822);width:199.76px;overflow:hidden;">Супер цветность</span>
<svg style="left:131.30px;top:262.23px" width="5.6" height="5.6" viewBox="0 0 7 7"><rect x="0.4" y="0.4" width="6.2" height="6.2" rx="1" fill="#fbfbfd" stroke="#b9c0cc" stroke-width="0.9"/><path d="M1.7 3.5h3.6M3.5 1.7v3.6" stroke="#3f6fc4" stroke-width="1"/></svg>
<span class="t" style="left:140.10px;top:259.58px;line-height:11.70px;font-size:9.0px;color:#000;transform:scaleX(0.838);width:85.32px;overflow:hidden;">Параметры графики</span>
<span class="t" style="left:215.60px;top:259.58px;line-height:11.70px;font-size:9.0px;color:#000;transform:scaleX(0.838);width:195.94px;overflow:hidden;">[]</span>
<span class="t" style="left:140.10px;top:272.52px;line-height:11.70px;font-size:9.0px;color:#000;transform:scaleX(0.838);width:85.32px;overflow:hidden;">Маска файла логов</span>
<svg style="left:131.20px;top:288.01px" width="5.7" height="5.7" viewBox="0 0 7 7"><rect x="0.4" y="0.4" width="6.2" height="6.2" fill="#eef2f8" stroke="#c9d6e6" stroke-width="0.8"/><path d="M1.8 3.5h3.4" stroke="#3a5f8f" stroke-width="1"/></svg>
<span class="t" style="left:140.10px;top:285.33px;line-height:11.96px;font-size:9.2px;color:#fff;transform:scaleX(0.838);font-weight:bold;letter-spacing:0.35px;">Управление питанием</span>
<span class="t" style="left:140.10px;top:298.40px;line-height:11.70px;font-size:9.0px;color:#000;transform:scaleX(0.838);width:85.32px;overflow:hidden;">После закрытия смены</span>
<span class="t" style="left:215.60px;top:298.40px;line-height:11.70px;font-size:9.0px;color:#000;transform:scaleX(0.838);width:195.94px;overflow:hidden;">Продолжать</span>
<span class="t" style="left:140.10px;top:311.34px;line-height:11.70px;font-size:9.0px;color:#000;transform:scaleX(0.838);width:85.32px;overflow:hidden;">Время ожидания отп</span>
<span class="t" style="left:215.60px;top:311.34px;line-height:11.70px;font-size:9.0px;color:#000;transform:scaleX(0.838);width:195.94px;overflow:hidden;">0</span>
<svg style="left:131.20px;top:326.83px" width="5.7" height="5.7" viewBox="0 0 7 7"><rect x="0.4" y="0.4" width="6.2" height="6.2" fill="#eef2f8" stroke="#c9d6e6" stroke-width="0.8"/><path d="M1.8 3.5h3.4" stroke="#3a5f8f" stroke-width="1"/></svg>
<span class="t" style="left:140.10px;top:324.15px;line-height:11.96px;font-size:9.2px;color:#fff;transform:scaleX(0.838);font-weight:bold;letter-spacing:0.35px;">Синхронизация</span>
<span class="t" style="left:140.10px;top:337.22px;line-height:11.70px;font-size:9.0px;color:#000;transform:scaleX(0.838);width:85.32px;overflow:hidden;">Автоматическое обн</span>
<svg style="left:216.40px;top:338.47px" width="9.4" height="9.4" viewBox="0 0 9.4 9.4"><rect x="0.5" y="0.5" width="8.4" height="8.4" fill="#fff" stroke="#333" stroke-width="0.85"/><path d="M2.1 4.7l1.9 2l3.3-4" stroke="#222" stroke-width="0.9" fill="none"/></svg>
<svg style="left:131.20px;top:352.71px" width="5.7" height="5.7" viewBox="0 0 7 7"><rect x="0.4" y="0.4" width="6.2" height="6.2" fill="#eef2f8" stroke="#c9d6e6" stroke-width="0.8"/><path d="M1.8 3.5h3.4" stroke="#3a5f8f" stroke-width="1"/></svg>
<span class="t" style="left:140.10px;top:350.03px;line-height:11.96px;font-size:9.2px;color:#fff;transform:scaleX(0.838);font-weight:bold;letter-spacing:0.35px;">Ограничения</span>
<span class="t" style="left:140.10px;top:363.10px;line-height:11.70px;font-size:9.0px;color:#000;transform:scaleX(0.838);width:85.32px;overflow:hidden;">Право доступа</span>
<svg style="left:384.90px;top:80.97px" width="5.7" height="5.7" viewBox="0 0 7 7"><rect x="0.4" y="0.4" width="6.2" height="6.2" fill="#eef2f8" stroke="#c9d6e6" stroke-width="0.8"/><path d="M1.8 3.5h3.4" stroke="#3a5f8f" stroke-width="1"/></svg>
<span class="t" style="left:393.80px;top:78.29px;line-height:11.96px;font-size:9.2px;color:#fff;transform:scaleX(0.838);font-weight:bold;letter-spacing:0.35px;">HTTP Ограничения</span>
<span class="t" style="left:393.80px;top:91.36px;line-height:11.70px;font-size:9.0px;color:#000;transform:scaleX(0.838);width:85.44px;overflow:hidden;">HTTP API</span>
<svg style="left:469.90px;top:93.51px" width="6.3" height="6.8" viewBox="0 0 7 7.4"><rect width="7" height="7.4" fill="#2470b8"/><path d="M2 5.6L3.5 1.6L5 5.6M2.5 4.3h2M1.6 6.3h3.8" stroke="#fff" stroke-width="0.8" fill="none"/></svg>
<span class="t" style="left:479.20px;top:91.36px;line-height:11.70px;font-size:9.0px;color:#000;transform:scaleX(0.838);width:183.77px;overflow:hidden;">HTTP Access</span>
<span class="t" style="left:393.80px;top:104.30px;line-height:11.70px;font-size:9.0px;color:#000;transform:scaleX(0.838);width:85.44px;overflow:hidden;">Web интерфейс</span>
<svg style="left:469.90px;top:106.45px" width="6.3" height="6.8" viewBox="0 0 7 7.4"><rect width="7" height="7.4" fill="#2470b8"/><path d="M2 5.6L3.5 1.6L5 5.6M2.5 4.3h2M1.6 6.3h3.8" stroke="#fff" stroke-width="0.8" fill="none"/></svg>
<span class="t" style="left:479.20px;top:104.30px;line-height:11.70px;font-size:9.0px;color:#000;transform:scaleX(0.838);width:183.77px;overflow:hidden;">HTTP Access</span>
<span class="t" style="left:393.80px;top:117.24px;line-height:11.70px;font-size:9.0px;color:#000;transform:scaleX(0.838);width:85.44px;overflow:hidden;">XML интерфейс</span>
<svg style="left:469.90px;top:119.39px" width="6.3" height="6.8" viewBox="0 0 7 7.4"><rect width="7" height="7.4" fill="#2470b8"/><path d="M2 5.6L3.5 1.6L5 5.6M2.5 4.3h2M1.6 6.3h3.8" stroke="#fff" stroke-width="0.8" fill="none"/></svg>
<span class="t" style="left:479.20px;top:117.24px;line-height:11.70px;font-size:9.0px;color:#000;transform:scaleX(0.838);width:183.77px;overflow:hidden;">HTTP Access</span>
<svg style="left:384.90px;top:132.73px" width="5.7" height="5.7" viewBox="0 0 7 7"><rect x="0.4" y="0.4" width="6.2" height="6.2" fill="#eef2f8" stroke="#c9d6e6" stroke-width="0.8"/><path d="M1.8 3.5h3.4" stroke="#3a5f8f" stroke-width="1"/></svg>
<span class="t" style="left:393.80px;top:130.05px;line-height:11.96px;font-size:9.2px;color:#fff;transform:scaleX(0.838);font-weight:bold;letter-spacing:0.35px;">HTTP Server</span>
<span class="t" style="left:393.80px;top:143.12px;line-height:11.70px;font-size:9.0px;color:#000;transform:scaleX(0.8);width:89.50px;overflow:hidden;">HTTP Bind Address</span>
<span class="t" style="left:393.80px;top:156.06px;line-height:11.70px;font-size:9.0px;color:#000;transform:scaleX(0.795);width:90.06px;overflow:hidden;">Use Free Listen Port</span>
<svg style="left:470.20px;top:157.31px" width="9.4" height="9.4" viewBox="0 0 9.4 9.4"><rect x="0.5" y="0.5" width="8.4" height="8.4" fill="#fff" stroke="#333" stroke-width="0.85"/></svg>
<span class="t" style="left:393.80px;top:169.00px;line-height:11.70px;font-size:9.0px;color:#000;transform:scaleX(0.8);width:89.50px;overflow:hidden;">Max count log files</span>
<span class="t" style="left:469.40px;top:169.00px;line-height:11.70px;font-size:9.0px;color:#000;transform:scaleX(0.838);width:195.47px;overflow:hidden;">0</span>
<span class="t" style="left:393.80px;top:181.94px;line-height:11.70px;font-size:9.0px;color:#000;transform:scaleX(0.8);width:89.50px;overflow:hidden;">HTTP log path</span>
<span class="t" style="left:393.80px;top:194.88px;line-height:11.70px;font-size:9.0px;color:#000;transform:scaleX(0.8);width:89.50px;overflow:hidden;">Log HTTP query and re</span>
<svg style="left:470.20px;top:196.13px" width="9.4" height="9.4" viewBox="0 0 9.4 9.4"><rect x="0.5" y="0.5" width="8.4" height="8.4" fill="#fff" stroke="#333" stroke-width="0.85"/></svg>
<span class="t" style="left:393.80px;top:207.82px;line-height:11.70px;font-size:9.0px;color:#000;transform:scaleX(0.8);width:89.50px;overflow:hidden;">Not log command list</span>
<span class="t" style="left:393.80px;top:220.76px;line-height:11.70px;font-size:9.0px;color:#000;transform:scaleX(0.8);width:89.50px;overflow:hidden;">HTTP Data Port</span>
<span class="t" style="left:469.40px;top:220.76px;line-height:11.70px;font-size:9.0px;color:#000;transform:scaleX(0.838);width:195.47px;overflow:hidden;">12345</span>
<svg style="left:384.90px;top:236.25px" width="5.7" height="5.7" viewBox="0 0 7 7"><rect x="0.4" y="0.4" width="6.2" height="6.2" fill="#eef2f8" stroke="#c9d6e6" stroke-width="0.8"/><path d="M1.8 3.5h3.4" stroke="#3a5f8f" stroke-width="1"/></svg>
<span class="t" style="left:393.80px;top:233.57px;line-height:11.96px;font-size:9.2px;color:#fff;transform:scaleX(0.838);font-weight:bold;letter-spacing:0.35px;">Кассовые ограничения</span>
<svg style="left:385.00px;top:249.29px" width="5.6" height="5.6" viewBox="0 0 7 7"><rect x="0.4" y="0.4" width="6.2" height="6.2" rx="1" fill="#fbfbfd" stroke="#b9c0cc" stroke-width="0.9"/><path d="M1.7 3.5h3.6M3.5 1.7v3.6" stroke="#3f6fc4" stroke-width="1"/></svg>
<span class="t" style="left:393.80px;top:246.64px;line-height:11.70px;font-size:9.0px;color:#000;transform:scaleX(0.838);width:85.44px;overflow:hidden;">Права</span>
<span class="t" style="left:469.40px;top:246.64px;line-height:11.70px;font-size:9.0px;color:#000;transform:scaleX(0.838);width:195.47px;overflow:hidden;">[Access denied, Права WSA, Право СБП, Ресторан</span>
<svg style="left:384.90px;top:262.13px" width="5.7" height="5.7" viewBox="0 0 7 7"><rect x="0.4" y="0.4" width="6.2" height="6.2" fill="#eef2f8" stroke="#c9d6e6" stroke-width="0.8"/><path d="M1.8 3.5h3.4" stroke="#3a5f8f" stroke-width="1"/></svg>
<span class="t" style="left:393.80px;top:259.45px;line-height:11.96px;font-size:9.2px;color:#fff;transform:scaleX(0.838);font-weight:bold;letter-spacing:0.35px;">Назначения принтеров</span>
<span class="t" style="left:393.80px;top:272.52px;line-height:11.70px;font-size:9.0px;color:#000;transform:scaleX(0.838);width:85.44px;overflow:hidden;">Автозакрытие смены</span>
<span class="t" style="left:393.80px;top:285.46px;line-height:11.70px;font-size:9.0px;color:#8c8c8c;transform:scaleX(0.838);width:85.44px;overflow:hidden;">Бот ProAlert</span>
<svg style="left:469.90px;top:287.61px" width="6.3" height="6.8" viewBox="0 0 7 7.4"><rect width="7" height="7.4" fill="#2470b8"/><path d="M2 5.6L3.5 1.6L5 5.6M2.5 4.3h2M1.6 6.3h3.8" stroke="#fff" stroke-width="0.8" fill="none"/></svg>
<span class="t" style="left:480.20px;top:285.46px;line-height:11.70px;font-size:9.0px;color:#111;transform:scaleX(0.838);font-style:italic;width:182.58px;overflow:hidden;letter-spacing:-0.5px;">6 принтер ProAlert</span>
<span class="t" style="left:393.80px;top:298.40px;line-height:11.70px;font-size:9.0px;color:#000;transform:scaleX(0.838);width:85.44px;overflow:hidden;">Виртуальный терминал</span>
<svg style="left:469.90px;top:300.55px" width="6.3" height="6.8" viewBox="0 0 7 7.4"><rect width="7" height="7.4" fill="#2470b8"/><path d="M2 5.6L3.5 1.6L5 5.6M2.5 4.3h2M1.6 6.3h3.8" stroke="#fff" stroke-width="0.8" fill="none"/></svg>
<span class="t" style="left:479.20px;top:298.40px;line-height:11.70px;font-size:9.0px;color:#000;transform:scaleX(0.815);width:188.96px;overflow:hidden;">11 Виртуальный терминал ProQrPAy</span>
<span class="t" style="left:393.80px;top:311.34px;line-height:11.70px;font-size:9.0px;color:#000;transform:scaleX(0.838);width:85.44px;overflow:hidden;">Для XML отчетов</span>
<span class="t" style="left:393.80px;top:324.28px;line-height:11.70px;font-size:9.0px;color:#8c8c8c;transform:scaleX(0.838);width:85.44px;overflow:hidden;">Для Пейджеров</span>
<span class="t" style="left:393.80px;top:337.22px;line-height:11.70px;font-size:9.0px;color:#000;transform:scaleX(0.838);width:85.44px;overflow:hidden;">Для пречеков</span>
<svg style="left:469.90px;top:339.37px" width="6.3" height="6.8" viewBox="0 0 7 7.4"><rect width="7" height="7.4" fill="#2470b8"/><path d="M2 5.6L3.5 1.6L5 5.6M2.5 4.3h2M1.6 6.3h3.8" stroke="#fff" stroke-width="0.8" fill="none"/></svg>
<span class="t" style="left:479.20px;top:337.22px;line-height:11.70px;font-size:9.0px;color:#000;transform:scaleX(0.838);width:183.77px;overflow:hidden;">12 PDF</span>
<span class="t" style="left:393.80px;top:350.16px;line-height:11.70px;font-size:9.0px;color:#000;transform:scaleX(0.838);width:85.44px;overflow:hidden;">Для чеков</span>
<svg style="left:469.90px;top:352.31px" width="6.3" height="6.8" viewBox="0 0 7 7.4"><rect width="7" height="7.4" fill="#2470b8"/><path d="M2 5.6L3.5 1.6L5 5.6M2.5 4.3h2M1.6 6.3h3.8" stroke="#fff" stroke-width="0.8" fill="none"/></svg>
<span class="t" style="left:479.20px;top:350.16px;line-height:11.70px;font-size:9.0px;color:#000;transform:scaleX(0.838);width:183.77px;overflow:hidden;">12 PDF</span>
<span class="t" style="left:393.80px;top:363.10px;line-height:11.70px;font-size:9.0px;color:#8c8c8c;transform:scaleX(0.838);width:85.44px;overflow:hidden;">Отчеты</span>
<svg style="left:469.90px;top:365.25px" width="6.3" height="6.8" viewBox="0 0 7 7.4"><rect width="7" height="7.4" fill="#2470b8"/><path d="M2 5.6L3.5 1.6L5 5.6M2.5 4.3h2M1.6 6.3h3.8" stroke="#fff" stroke-width="0.8" fill="none"/></svg>
<span class="t" style="left:480.20px;top:363.10px;line-height:11.70px;font-size:9.0px;color:#111;transform:scaleX(0.838);font-style:italic;width:182.58px;overflow:hidden;letter-spacing:-0.4px;">12 PDF</span>
<span class="t" style="left:648.20px;top:78.42px;line-height:11.70px;font-size:9.0px;color:#000;transform:scaleX(0.838);width:84.49px;overflow:hidden;">Принтер А4</span>
<span class="t" style="left:648.20px;top:91.36px;line-height:11.70px;font-size:9.0px;color:#8c8c8c;transform:scaleX(0.838);width:84.49px;overflow:hidden;">Просмотр на экране</span>
<span class="t" style="left:648.20px;top:104.30px;line-height:11.70px;font-size:9.0px;color:#000;transform:scaleX(0.838);width:84.49px;overflow:hidden;">Терминал авторизац</span>
<div style="left:138.60px;top:350.40px;width:54.60px;height:9.60px;border:0.8px dotted rgba(225,190,150,0.85);"></div>
<div style="left:126.40px;top:114.00px;width:106.80px;height:16.40px;border:2.3px solid #e8392d;border-radius:4.8px;"></div>
<div style="left:126.90px;top:75.30px;width:1.00px;height:316.00px;background:#a8a8b0;"></div>
<div style="left:127.90px;top:380.00px;width:663.00px;height:10.00px;background:#f0f0f0;"></div>
<div style="left:138.80px;top:380.00px;width:427.40px;height:10.00px;background:#cdcdcd;"></div>
<svg style="left:128.40px;top:380.00px" width="8" height="10" viewBox="0 0 8 10"><path d="M5.70 2.00L2.30 5L5.70 8.00" stroke="#505050" stroke-width="1.3" fill="none"/></svg>
<svg style="left:782.00px;top:380.00px" width="8" height="10" viewBox="0 0 8 10"><path d="M2.30 2.00L5.70 5L2.30 8.00" stroke="#505050" stroke-width="1.3" fill="none"/></svg>
<div style="left:126.90px;top:390.60px;width:664.00px;height:0.90px;background:#9a9aa8;"></div>
<div style="left:126.90px;top:392.20px;width:664.00px;height:0.90px;background:#d0d0d8;"></div>
<div style="left:126.90px;top:393.60px;width:664.00px;height:32.80px;background:#ffffe1;border-left:1px solid #b0b0a0;border-top:1px solid #b8b8a8;"></div>
<span class="t" style="left:129.40px;top:394.65px;line-height:11.70px;font-size:9.0px;color:#222;transform:scaleX(0.838);">Ограничения::</span>
<div style="left:5.20px;top:428.40px;width:95.60px;height:15.40px;background:#efefef;border:1px solid #fff;border-right:1.4px solid #8a8a8a;border-bottom:1.4px solid #8a8a8a;"></div>
<svg style="left:8.20px;top:431.00px;" width="10" height="10.6" viewBox="0 0 12 12"><rect x="0.8" y="0.8" width="10.4" height="10.4" fill="#eaf6fb" stroke="#8ab8d0" stroke-width="0.6"/><path d="M3.8 1.6v9M8 1.6v9" stroke="#50a0d8" stroke-width="0.9"/><rect x="2.6" y="6.8" width="2.4" height="2.6" fill="#2a70d0"/><rect x="6.8" y="2.6" width="2.4" height="2.6" fill="#3fae3f"/></svg>
<span class="t" style="left:20.80px;top:431.05px;line-height:11.70px;font-size:9.0px;color:#000;transform:scaleX(0.838);">Параметры</span>
<div style="left:103.40px;top:428.40px;width:94.20px;height:15.40px;background:#efefef;border:1px solid #fff;border-right:1.4px solid #8a8a8a;border-bottom:1.4px solid #8a8a8a;"></div>
<svg style="left:106.40px;top:431.00px;" width="10.4" height="10.4" viewBox="0 0 12 12"><circle cx="6" cy="6" r="5.4" fill="#eef4ee" stroke="#5a9a5a" stroke-width="0.8"/><path d="M6 6V1.4A4.6 4.6 0 0 1 10.4 7.4z" fill="#e8482e"/><path d="M6 6L10.4 7.4A4.6 4.6 0 0 1 4 10z" fill="#3fae3f"/><path d="M6 6L4 10A4.6 4.6 0 0 1 1.8 4.2z" fill="#f0c030"/></svg>
<span class="t" style="left:119.00px;top:431.05px;line-height:11.70px;font-size:9.0px;color:#000;transform:scaleX(0.838);">[2] Меню</span>
<div style="left:200.80px;top:428.40px;width:94.00px;height:14.60px;background:#f5f5f5;border:1px solid #e8e8e8;border-top:1.2px solid #8c8c8c;border-left:1.2px solid #8c8c8c;"></div>
<svg style="left:203.40px;top:431.00px;" width="10.6" height="10.6" viewBox="0 0 12 12"><path d="M1 8.2L5.6 2.2l5.6 1.6L7.4 10.4z" fill="#d2d6de" stroke="#8a909c" stroke-width="0.6"/><path d="M6 1l4.6 1.2l-1.4 2.4L4.8 3.2z" fill="#5c6675" stroke="#4a505c" stroke-width="0.4"/><rect x="7" y="1.8" width="2.2" height="1.4" fill="#47b04a" transform="rotate(14 8 2.5)"/><path d="M1 8.2l6.4 2.2v1.2L1 9.4z" fill="#9aa2b0"/><path d="M3.4 6.6l4.4 1.4M4.4 5.4l4.4 1.4M5.2 4.4l4.2 1.3" stroke="#8a93a6" stroke-width="0.7"/></svg>
<span class="t" style="left:216.40px;top:430.92px;line-height:11.96px;font-size:9.2px;color:#000;transform:scaleX(0.838);font-weight:bold;letter-spacing:0.3px;">Кассовые станции</span>
</body></html>
